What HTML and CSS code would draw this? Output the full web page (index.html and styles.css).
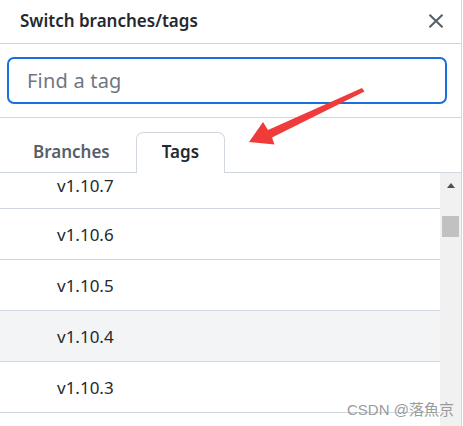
FILE: index.html
```html
<!DOCTYPE html>
<html lang="en">
<head>
<meta charset="utf-8">
<title>Switch branches/tags</title>
<link rel="stylesheet" href="styles.css">
</head>
<body>
<div class="dialog">
  <header class="header">
    <h1 class="title">Switch branches/tags</h1>
    <button class="close" aria-label="Close">
      <svg width="16" height="14" viewBox="0 0 16 14"><path d="M1.5 0.8 L14.5 13.2 M14.5 0.8 L1.5 13.2" stroke="#57606a" stroke-width="2.1" fill="none"/></svg>
    </button>
  </header>
  <div class="search">
    <input class="input" type="text" placeholder="Find a tag">
  </div>
  <nav class="tabs">
    <button class="tab">Branches</button>
    <button class="tab active">Tags</button>
  </nav>
  <div class="body">
    <ul class="list">
      <li class="row first">v1.10.7</li>
      <li class="row">v1.10.6</li>
      <li class="row">v1.10.5</li>
      <li class="row hover">v1.10.4</li>
      <li class="row">v1.10.3</li>
    </ul>
    <div class="scrollbar">
      <span class="sb-arrow"></span>
      <span class="sb-thumb"></span>
    </div>
  </div>
</div>
<svg class="annot" width="463" height="426" viewBox="0 0 463 426">
  <polygon points="362,88 364.5,91.5 272,137.5 274.5,144.5 249,142 263,122 268,130" fill="#f03b3b"/>
</svg>
<div class="watermark">CSDN @落魚京</div>
</body>
</html>
```
FILE: styles.css
```css
* { box-sizing: border-box; }
html, body { margin: 0; padding: 0; }
body {
  width: 463px;
  height: 426px;
  overflow: hidden;
  background: #fff;
  font-family: "Noto Sans", "Open Sans", sans-serif;
  color: #24292f;
  position: relative;
}
.dialog {
  width: 462px;
  height: 426px;
  border-right: 1px solid #d0d7de;
  background: #fff;
  display: flex;
  flex-direction: column;
}
.header {
  height: 44px;
  border-bottom: 1px solid #d0d7de;
  display: flex;
  align-items: center;
  justify-content: space-between;
  padding: 0 17px 2px 20px;
  flex: none;
}
.title {
  margin: 0;
  font-size: 17px;
  font-weight: 600;
  color: #24292f;
  letter-spacing: 0;
}
.close {
  border: 0;
  background: none;
  padding: 0;
  width: 16px;
  height: 14px;
  display: flex;
}
.search {
  padding: 13px 14px 13px 7px;
  border-bottom: 1px solid #d0d7de;
  flex: none;
}
.input {
  display: block;
  width: 440px;
  height: 47px;
  border: 2px solid #1b6fdc;
  border-radius: 7px;
  padding: 0 18px;
  font-family: "Noto Sans", "Open Sans", sans-serif;
  font-size: 20px;
  letter-spacing: 0.2px;
  color: #24292f;
  outline: none;
}
.input::placeholder { color: #6e7781; }
.tabs {
  height: 55px;
  border-bottom: 1px solid #d0d7de;
  display: flex;
  align-items: flex-end;
  padding: 0 7px;
  flex: none;
}
.tab {
  height: 41px;
  margin-bottom: -1px;
  padding: 0 25px 3px;
  border: 1px solid transparent;
  border-bottom: 0;
  border-radius: 7px 7px 0 0;
  background: none;
  font-family: "Noto Sans", "Open Sans", sans-serif;
  font-size: 17px;
  font-weight: 600;
  color: #57606a;
}
.tab.active {
  border-color: #d0d7de;
  background: #fff;
  color: #24292f;
}
.body {
  flex: 1;
  display: flex;
  min-height: 0;
}
.list {
  flex: 1;
  margin: 0;
  padding: 0;
  list-style: none;
  overflow: hidden;
}
.row {
  height: 51px;
  border-bottom: 1px solid #d0d7de;
  padding: 0 0 0 57px;
  display: flex;
  align-items: center;
  font-size: 17px;
  color: #24292f;
}
.row.first { margin-top: -15px; padding-top: 4px; }
.row.hover { background: #f3f4f6; }
.scrollbar {
  width: 21px;
  flex: none;
  background: #f1f1f1;
  display: flex;
  flex-direction: column;
  align-items: center;
  padding-top: 10px;
}
.sb-arrow {
  width: 0;
  height: 0;
  border-left: 4.5px solid transparent;
  border-right: 4.5px solid transparent;
  border-bottom: 5px solid #505050;
}
.sb-thumb {
  width: 17px;
  height: 21px;
  margin-top: 28px;
  background: #c1c1c1;
}
.annot {
  position: absolute;
  left: 0;
  top: 0;
  pointer-events: none;
}
.watermark {
  position: absolute;
  left: 347px;
  top: 398px;
  font-family: "Liberation Sans", "Noto Sans CJK SC", sans-serif;
  font-size: 15px;
  color: #9b9b9b;
  white-space: nowrap;
}
```
